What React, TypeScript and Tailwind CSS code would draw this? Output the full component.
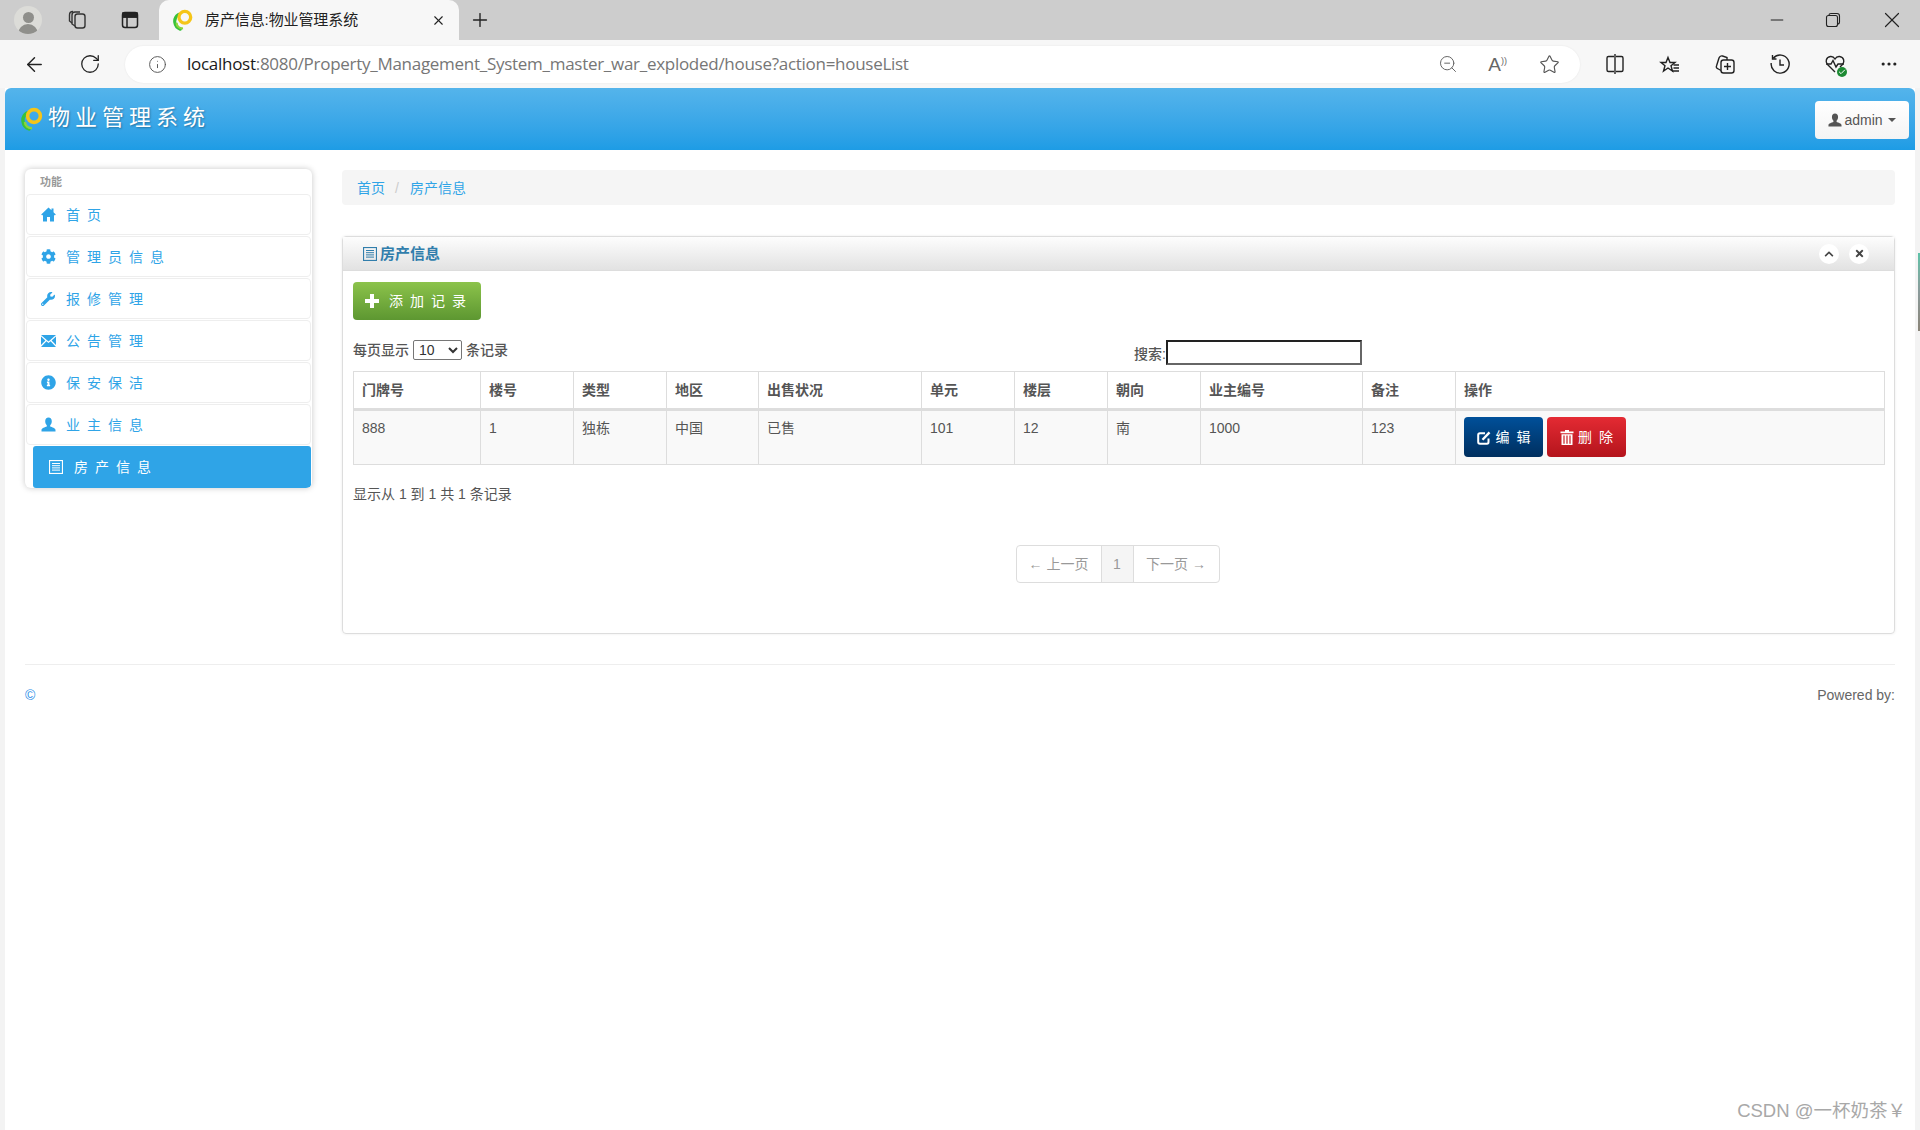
import React from 'react';
import { ArrowLeft, RotateCw, Info, ZoomOut, Star, Plus, Minus, X, MoreHorizontal, Check } from 'lucide-react';
import { FaCog, FaWrench, FaInfoCircle, FaChevronUp, FaTimes } from 'react-icons/fa';

const Logo: React.FC<{ size: number }> = ({ size }) => (
  <svg width={size} height={size} viewBox="0 0 24 24" fill="none">
    <path d="M7 6 A9 9 0 0 0 9 22" stroke="#37c23a" strokeWidth="3.4" strokeLinecap="round" />
    <path d="M5 15 A6 6 0 0 0 12 21" stroke="#8bd43a" strokeWidth="2.4" />
    <circle cx="14" cy="9" r="6.4" stroke="#f5c518" strokeWidth="3.6" />
  </svg>
);

const ListIcon: React.FC<{ size?: number; className?: string }> = ({ size = 14, className }) => (
  <svg width={size} height={size} viewBox="0 0 14 14" className={className} fill="none" stroke="currentColor">
    <rect x="0.5" y="0.5" width="13" height="13" strokeWidth="1.2" />
    <path d="M3 3.5H11M3 5.7H11M3 7.9H11M3 10.1H11" strokeWidth="1" />
  </svg>
);

// glyphicons style icons
const HomeIcon: React.FC = () => (
  <svg width="15" height="15" viewBox="0 0 15 15" fill="currentColor">
    <path d="M7.5 0.5L0.2 7.4L1.2 8.4L2 7.8V14.5H6V10H9V14.5H13V7.8L13.8 8.4L14.8 7.4L12.5 5.2V1.5H10.5V3.3Z" />
  </svg>
);

const MailIcon: React.FC = () => (
  <svg width="15" height="12" viewBox="0 0 15 12" fill="currentColor">
    <path d="M0 0H15L7.5 6.5Z" />
    <path d="M0 1.6L4.4 5.4L0 10Z" />
    <path d="M15 1.6L10.6 5.4L15 10Z" />
    <path d="M0 12L5.4 6.3L7.5 8.1L9.6 6.3L15 12Z" />
  </svg>
);

const UserIcon: React.FC<{ size?: number; className?: string }> = ({ size = 15, className }) => (
  <svg width={size} height={size} viewBox="0 0 15 15" fill="currentColor" className={className}>
    <path d="M7.5 0.5C5.4 0.5 4.2 2 4.2 4.2C4.2 6 5 7.4 5.8 8.2V9.6C4 10.4 0.5 11 0.5 13V14.5H14.5V13C14.5 11 11 10.4 9.2 9.6V8.2C10 7.4 10.8 6 10.8 4.2C10.8 2 9.6 0.5 7.5 0.5Z" />
  </svg>
);

const PlusIcon: React.FC = () => (
  <svg width="14" height="14" viewBox="0 0 14 14" fill="currentColor" className="mr-[10px]">
    <path d="M5 0H9V5H14V9H9V14H5V9H0V5H5Z" />
  </svg>
);

const EditIcon: React.FC = () => (
  <svg width="15" height="15" viewBox="0 0 15 15" fill="none" stroke="currentColor" strokeWidth="2" className="mr-[4px]">
    <path d="M11.5 8.5V12C11.5 13 11 13.8 10 13.8H3C2 13.8 1.2 13 1.2 12V5C1.2 4 2 3.2 3 3.2H8" />
    <path d="M5.5 9.8L12.5 2.4" strokeWidth="2.4" />
  </svg>
);

const TrashIcon: React.FC = () => (
  <svg width="14" height="15" viewBox="0 0 14 15" fill="currentColor" className="mr-[4px]">
    <path d="M5 0H9V1.5H13.5V3.2H0.5V1.5H5Z" />
    <path d="M1.5 4.2H12.5V15H1.5ZM3.4 5.5V13.7H4.6V5.5ZM6.4 5.5V13.7H7.6V5.5ZM9.4 5.5V13.7H10.6V5.5Z" fillRule="evenodd" />
  </svg>
);

const tableHead = ['门牌号', '楼号', '类型', '地区', '出售状况', '单元', '楼层', '朝向', '业主编号', '备注', '操作'];
const tableRow = ['888', '1', '独栋', '中国', '已售', '101', '12', '南', '1000', '123'];
const colWidths = ['w-[127px]', 'w-[93px]', 'w-[93px]', 'w-[92px]', 'w-[163px]', 'w-[93px]', 'w-[93px]', 'w-[93px]', 'w-[162px]', 'w-[93px]', 'w-[429px]'];

const menu = [
  { label: '首页', icon: <HomeIcon /> },
  { label: '管理员信息', icon: <FaCog size={15} /> },
  { label: '报修管理', icon: <FaWrench size={14} /> },
  { label: '公告管理', icon: <MailIcon /> },
  { label: '保安保洁', icon: <FaInfoCircle size={15} /> },
  { label: '业主信息', icon: <UserIcon /> }
];

const BrowserChrome: React.FC = () => (
  <>
    <div className="flex h-10 bg-[#cdcdcd] text-[#222]">
      <div className="flex w-[159px] items-center pl-[14px]">
        <div className="flex h-[28px] w-[28px] flex-col items-center justify-end overflow-hidden rounded-full bg-[#dcdcd8]">
          <div className="h-[11px] w-[11px] rounded-full bg-[#8f8f8b]" />
          <div className="mt-[1px] h-[10px] w-[20px] rounded-t-full bg-[#8f8f8b]" />
        </div>
        <svg width="22" height="22" viewBox="0 0 22 22" fill="none" stroke="#333" strokeWidth="1.4" className="ml-[24px]">
          <rect x="9" y="5" width="10" height="14" rx="2.5" />
          <path d="M9 17 L6 15 V6 C6 4 7 3 9 3 H14" />
          <path d="M6 14 L3.5 12 V6 C3.5 4 5 2.5 7 2.5" />
        </svg>
        <svg width="20" height="20" viewBox="0 0 20 20" fill="none" stroke="#222" strokeWidth="1.5" className="ml-[32px]">
          <rect x="2.5" y="2.5" width="15" height="15" rx="2.5" />
          <path d="M2.5 7H17.5M7 7V17.5" />
          <path d="M3 3H17V7H3Z" fill="#222" />
        </svg>
      </div>
      <div className="flex h-10 w-[300px] items-center rounded-t-[10px] bg-[#f7f7f7] pl-[13px] pr-[13px]">
        <Logo size={22} />
        <span className="-mt-[2px] ml-[11px] flex-1 text-[15px] leading-none tracking-[-0.1px]">房产信息:物业管理系统</span>
        <X size={15} strokeWidth={1.8} />
      </div>
      <div className="ml-[10px] flex items-center">
        <Plus size={22} strokeWidth={1.5} />
      </div>
      <div className="ml-auto flex items-center gap-[38px] pr-[15px]">
        <Minus size={20} strokeWidth={1.2} />
        <svg width="16" height="16" viewBox="0 0 16 16" fill="none" stroke="#222" strokeWidth="1.1">
          <rect x="1.5" y="3.5" width="11" height="11" rx="2" />
          <path d="M4 3.5 V3 C4 2 5 1.5 6 1.5 H12 C13.5 1.5 14.5 2.5 14.5 4 V10 C14.5 11 14 12 12.5 12" />
        </svg>
        <X size={26} strokeWidth={1.1} />
      </div>
    </div>
    <div className="flex h-12 items-center bg-[#f7f7f7] text-[#222]">
      <div className="flex w-[125px] items-center pl-[23px]">
        <ArrowLeft size={23} strokeWidth={1.5} />
        <RotateCw size={22} strokeWidth={1.4} className="ml-[33px]" />
      </div>
      <div className="flex h-[37px] w-[1455px] items-center rounded-full bg-white pl-[23px] pr-[20px] shadow-[0_0_2px_rgba(0,0,0,0.08)]">
        <Info size={19} strokeWidth={1.2} className="text-[#555]" />
        <div className="-mt-[1px] ml-[20px] flex-1 font-['Open_Sans',sans-serif] text-[17px] leading-none tracking-[-0.28px] text-[#767676]">
          <span className="text-[#1a1a1a]">localhost</span>:8080/Property_Management_System_master_war_exploded/house?action=houseList
        </div>
        <ZoomOut size={20} strokeWidth={1.2} className="text-[#666]" />
        <div className="ml-[30px] font-['Liberation_Sans',sans-serif] text-[19px] leading-none text-[#666]">
          A<span className="align-super text-[9px]">))</span>
        </div>
        <Star size={21} strokeWidth={1.3} className="ml-[32px] text-[#555]" />
      </div>
      <div className="flex flex-1 items-center gap-[33px] pl-[24px]">
        <svg width="22" height="22" viewBox="0 0 22 22" fill="none" stroke="#222" strokeWidth="1.4">
          <path d="M10 3.5H4.5C3.5 3.5 3 4 3 5V17C3 18 3.5 18.5 4.5 18.5H10M12 3.5H17.5C18.5 3.5 19 4 19 5V17C19 18 18.5 18.5 17.5 18.5H12M11 1V21" />
        </svg>
        <svg width="22" height="22" viewBox="0 0 22 22" fill="none" stroke="#222" strokeWidth="1.4">
          <path d="M9 2.5L11 7.5H16L12 10.8L13.5 16L9 13L4.5 16L6 10.8L2 7.5H7Z" transform="translate(0 2)" />
          <path d="M14.5 12H20M14.5 15H20M13 18H20" />
        </svg>
        <svg width="22" height="22" viewBox="0 0 22 22" fill="none" stroke="#222" strokeWidth="1.4">
          <rect x="7" y="7" width="13" height="13" rx="2.5" />
          <path d="M13.5 10V17M10 13.5H17" />
          <path d="M7 17.5L3.5 15.5C2.5 15 2 14 2.5 13L5 5C5.5 3.5 7 2.5 8.5 3L13 4.5V7" />
        </svg>
        <svg width="22" height="22" viewBox="0 0 22 22" fill="none" stroke="#222" strokeWidth="1.4">
          <path d="M4.5 5A9 9 0 1 1 2.2 10M3.5 2V6H7.5M11 6.5V12H15" />
        </svg>
        <div className="relative">
          <svg width="22" height="22" viewBox="0 0 22 22" fill="none" stroke="#222" strokeWidth="1.4">
            <path d="M11 19L3.5 11.5C1 9 2 4 6.5 3.5C8.5 3.3 10 4.3 11 6C12 4.3 13.5 3.3 15.5 3.5C20 4 21 9 18.5 11.5L16 14" />
            <path d="M2 11H7L9 7.5L12 14L14 11H20" />
          </svg>
          <div className="absolute bottom-[-2px] right-[-1px] flex h-[10px] w-[10px] items-center justify-center rounded-full bg-[#1d8a33] text-white">
            <Check size={8} strokeWidth={3} />
          </div>
        </div>
        <MoreHorizontal size={20} strokeWidth={1.8} />
      </div>
    </div>
  </>
);

const Sidebar: React.FC = () => (
  <aside className="mt-[19px] h-[319px] w-[287px] overflow-hidden rounded-[6px] bg-white text-[#2fa4e7] shadow-[0_0_6px_rgba(0,0,0,0.22)]">
    <div className="h-[25px] pl-[15px] pt-[7px] text-[11px] leading-[13px] font-bold text-[#999]">功能</div>
    {menu.map(item => (
      <div key={item.label} className="mx-[1px] mb-[1px] flex h-[41px] items-center rounded-[4px] border border-[#eeeeee] bg-white pl-[14px]">
        <span className="flex w-[25px] shrink-0">{item.icon}</span>
        <span className="text-[14px] leading-none tracking-[7px]">{item.label}</span>
      </div>
    ))}
    <div className="ml-[8px] mr-[1px] flex h-[42px] items-center rounded-[3px] bg-[#2fa4e7] pl-[16px] text-white">
      <span className="flex w-[25px] shrink-0"><ListIcon size={14} /></span>
      <span className="text-[14px] leading-none tracking-[7px]">房产信息</span>
    </div>
  </aside>
);

const HouseTable: React.FC = () => (
  <table className="w-[1531px] table-fixed border-collapse border border-[#dddddd] text-[14px] text-[#555]">
    <thead>
      <tr className="h-[38px]">
        {tableHead.map((head, i) => (
          <th key={head} className={`${colWidths[i]} border border-b-[3px] border-[#dddddd] px-2 text-left font-bold`}>{head}</th>
        ))}
      </tr>
    </thead>
    <tbody>
      <tr className="h-[55px] bg-[#f9f9f9]">
        {tableRow.map((cell, i) => (
          <td key={i} className="border border-[#dddddd] px-2 pt-[7px] align-top leading-[20px]">{cell}</td>
        ))}
        <td className="border border-[#dddddd] px-2 align-middle">
          <div className="-mt-[1px] flex gap-[4px]">
            <div className="flex h-[40px] w-[79px] items-center justify-center rounded-[4px] bg-gradient-to-b from-[#00509a] to-[#002f5f] text-[14px] tracking-[7px] text-white">
              <EditIcon /><span className="-mr-[7px]">编辑</span>
            </div>
            <div className="flex h-[40px] w-[79px] items-center justify-center rounded-[4px] bg-gradient-to-b from-[#e42a33] to-[#b4141c] text-[14px] tracking-[7px] text-white">
              <TrashIcon /><span className="-mr-[7px]">删除</span>
            </div>
          </div>
        </td>
      </tr>
    </tbody>
  </table>
);

const Pagination: React.FC = () => (
  <div className="flex h-[38px] overflow-hidden rounded-[4px] border border-[#dddddd] text-[14px] text-[#999]">
    <div className="flex w-[84px] items-center justify-center">← 上一页</div>
    <div className="flex w-[33px] items-center justify-center border-x border-[#dddddd] bg-[#f5f5f5]">1</div>
    <div className="flex w-[85px] items-center justify-center">下一页 →</div>
  </div>
);

const Panel: React.FC = () => (
  <section className="mt-[31px] h-[398px] rounded-[4px] border border-[#dddddd] shadow-[0_0_3px_rgba(0,0,0,0.08)]">
    <div className="flex h-[34px] items-center border-b border-[#dddddd] bg-gradient-to-b from-[#fdfdfd] to-[#e2e2e2] pl-[20px] pr-[25px]">
      <ListIcon size={14} className="text-[#317eac]" />
      <h2 className="ml-[3px] flex-1 pt-[1px] text-[15px] font-bold text-[#317eac]">房产信息</h2>
      <div className="flex gap-[10px] text-[#444]">
        <div className="flex h-5 w-5 items-center justify-center rounded-full bg-white"><FaChevronUp size={10} /></div>
        <div className="flex h-5 w-5 items-center justify-center rounded-full bg-white"><FaTimes size={11} /></div>
      </div>
    </div>
    <div className="px-[10px] pt-[11px]">
      <div className="flex h-[38px] w-[128px] items-center rounded-[4px] bg-gradient-to-b from-[#8cc34b] to-[#5d9731] pl-[12px] text-white">
        <PlusIcon />
        <span className="text-[14px] leading-none tracking-[7px]">添加记录</span>
      </div>
      <div className="mt-[20px] flex h-[31px] text-[14px] leading-none text-[#555]">
        <div className="flex h-[20px] items-center">
          <span className="font-medium">每页显示</span>
          <select className="mx-[4px] h-[20px] w-[49px] rounded-[2px] border border-[#767676] bg-white pl-[1px] text-[14px] font-medium text-[#333]">
            <option>10</option>
          </select>
          <span className="font-medium">条记录</span>
        </div>
        <div className="ml-[626px] flex items-center self-start">
          <span className="pt-[3px] font-medium">搜索:</span>
          <input className="h-[25px] w-[196px] border-2 border-t-[#222] border-r-[#666] border-b-[#666] border-l-[#222] bg-white" />
        </div>
      </div>
      <HouseTable />
      <div className="mt-[19px] text-[14px] leading-[20px] text-[#555]">显示从 1 到 1 共 1 条记录</div>
      <div className="mt-[41px] flex justify-center pr-[2px]">
        <Pagination />
      </div>
    </div>
  </section>
);

export default function App() {
  return (
    <div className="relative flex h-[1130px] w-[1920px] flex-col overflow-hidden bg-white font-['Liberation_Sans','Noto_Sans_CJK_SC',sans-serif]">
      <BrowserChrome />
      <div className="flex min-h-0 flex-1 bg-[#f3f3f3] pl-[5px] pr-[5px]">
        <div className="flex w-full flex-col bg-white">
          <header className="flex h-[62px] items-center rounded-t-[6px] bg-gradient-to-b from-[#54b4eb] to-[#1d9ce5] pl-[15px] pr-[6px]">
            <Logo size={24} />
            <span className="-mt-[2px] ml-[4px] text-[22px] leading-none tracking-[5px] text-white [text-shadow:1px_1px_2px_rgba(0,0,0,0.3)]">物业管理系统</span>
            <div className="ml-auto mt-[2px] flex h-[38px] w-[94px] items-center justify-center rounded-[4px] bg-gradient-to-b from-white to-[#f4f4f4] text-[14px] text-[#555]">
              <UserIcon size={14} className="mr-[2px]" />
              <span>admin</span>
              <span className="ml-[5px] border-x-[4px] border-t-[4px] border-x-transparent border-t-[#555]" />
            </div>
          </header>
          <div className="flex pl-[20px]">
            <Sidebar />
            <main className="ml-[30px] mt-[20px] w-[1553px]">
              <div className="flex h-[35px] items-center rounded-[4px] bg-[#f5f5f5] pl-[15px] pt-[1px] text-[14px] text-[#2fa4e7]">
                <span>首页</span>
                <span className="ml-[10px] mr-[11px] text-[#ccc]">/</span>
                <span>房产信息</span>
              </div>
              <Panel />
            </main>
          </div>
          <footer className="mx-[20px] mt-[30px] flex border-t border-[#eeeeee] pt-[20px] text-[14px] leading-[20px]">
            <span className="text-[#2b8fe8]">©</span>
            <span className="ml-auto text-[#666]">Powered by:</span>
          </footer>
        </div>
      </div>
      <div className="absolute right-0 top-[253px] h-[78px] w-[2px] bg-gradient-to-b from-[#5cc2a8] via-[#8a9a9a] to-[#8a8478]" />
      <div className="absolute bottom-[10px] right-[14px] text-[18.5px] leading-none text-[#a8a8a8]">CSDN @一杯奶茶￥</div>
    </div>
  );
}
